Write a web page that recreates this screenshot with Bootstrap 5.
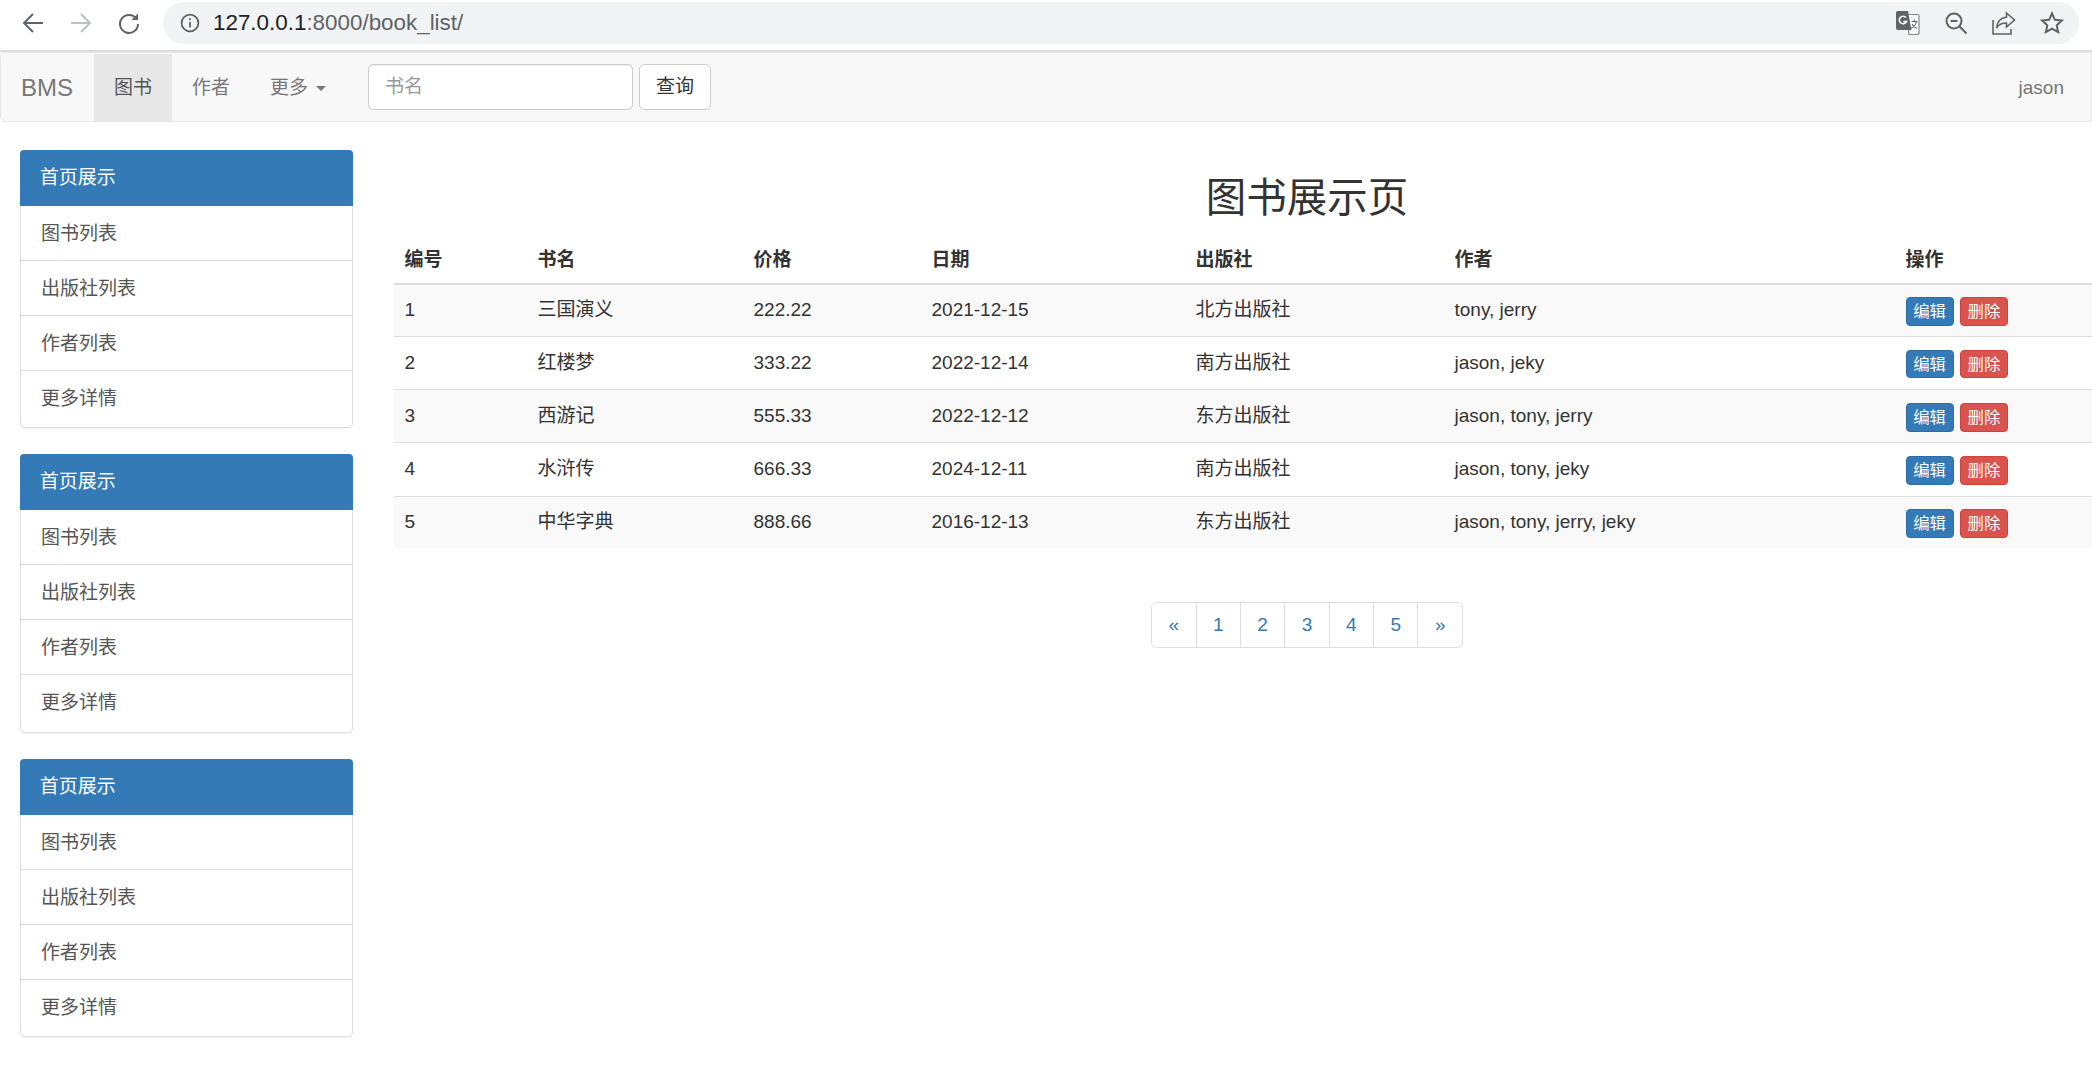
<!DOCTYPE html>
<html lang="zh-CN">
<head>
<meta charset="utf-8">
<title>图书展示页</title>
<link href="https://cdn.jsdelivr.net/npm/bootstrap@5.3.0/dist/css/bootstrap.min.css" rel="stylesheet">
<style>
body { font-family: "Liberation Sans", "Noto Sans CJK SC", sans-serif; font-size: 19px; line-height: 1.42857; color: #333; background: #fff; }
a { text-decoration: none; }

.chrome-bar { height: 52px; padding: 2px 13px 6px 0; border-bottom: 2px solid #dadce0; background: #fff; }
.chrome-nav { width: 163px; padding-left: 21px; gap: 24px; }
.chrome-pill { height: 42px; border-radius: 21px; background: #f1f3f4; padding: 0 15px 0 17px; }
.chrome-url { font-size: 22.4px; color: #5f6368; margin-left: 13px; line-height: 42px; }
.chrome-url b { font-weight: 400; color: #202124; }
.chrome-actions { gap: 24px; }

.bms-nav.navbar { height: 70px; padding: 0; background: #f8f8f8; border: 1.33px solid #e7e7e7; border-radius: 5.33px 0 0 5.33px; margin-bottom: 26.67px; flex-wrap: nowrap; }
.bms-nav .navbar-brand { font-size: 24px; color: #777; padding: 0 21px 0 20px; margin: 0; line-height: 67px; }
.bms-nav.navbar .navbar-nav .nav-link { color: #777; padding: 0 20px; line-height: 67px; height: 67px; font-size: 19px; }
.bms-nav.navbar .navbar-nav .nav-link.active { background: #e7e7e7; color: #555; }
.bms-nav .dropdown-toggle::after { margin-left: 8px; vertical-align: 3px; }
.bms-search { margin-left: 22px; gap: 6px; }
.bms-search .form-control { width: 265px; height: 46px; font-size: 19px; padding: 0 16px; border: 1.33px solid #ccc; border-radius: 5.33px; color: #555; box-shadow: inset 0 1px 1px rgba(0,0,0,.075); }
.bms-search .form-control::placeholder { color: #999; }
.bms-search .btn { width: 72px; height: 46px; font-size: 19px; padding: 1px 0 0; border: 1.33px solid #ccc; border-radius: 5.33px; color: #333; background: #fff; }
.bms-user { margin-right: 7px; }

.page-shell { display: flex; width: 100%; }
.side-col { width: 394px; flex: none; padding: 1.33px 41px 0 20px; }
.main-col { flex: 1 1 0; min-width: 0; }

.side-panel.card { border: 1.33px solid #ddd; border-radius: 5.33px; margin-bottom: 26.67px; box-shadow: 0 1px 1px rgba(0,0,0,.05); height: 278px; }
.side-panel .card-header { height: 56px; margin: -1.33px -1.33px 0; padding: 0 20px; line-height: 55px; background: #337ab7; color: #fff; border: 0; border-radius: 4px 4px 0 0; font-size: 19px; }
.side-panel .list-group-item { height: 55px; padding: 0 20px; line-height: 55px; color: #555; border-color: #ddd; border-width: 0 0 1.33px; font-size: 19px; background: transparent; }
.side-panel .list-group-item:last-child { border-bottom: 0; }

.page-title { font-size: 40.5px; font-weight: 400; line-height: 44px; margin: 27px 0 11px; padding-left: 128px; text-align: center; color: #333; }

.book-table.table { --bs-table-color: #333; --bs-table-striped-color: #333; --bs-table-striped-bg: #f9f9f9; --bs-table-border-color: #ddd; --bs-table-bg: transparent; table-layout: fixed; width: 100%; margin-bottom: 54px; font-size: 19px; }
.book-table th, .book-table td { padding: 0 10.5px; vertical-align: middle; color: #333; }
.book-table thead th { height: 53px; padding-top: 6px; border-bottom: 2.67px solid #ddd; font-weight: 700; }
.book-table tbody td { height: 53.1px; padding-bottom: 2px; border-bottom: 1.33px solid #ddd; }
.book-table tbody tr:last-child td { height: 51.5px; padding-bottom: 1px; border-bottom: 0; }
.w-no { width: 133px; } .w-name { width: 216px; } .w-price { width: 178px; } .w-date { width: 264px; }
.w-pub { width: 259px; } .w-author { width: 451px; }
.op-cell { white-space: nowrap; }
.op-btn.btn { font-size: 16.4px; line-height: 24px; padding: 1.33px 6.67px; border-radius: 4px; border-width: 1.33px; position: relative; top: 1.5px; }
.op-btn.btn-primary { background: #337ab7; border-color: #2e6da4; }
.op-btn.btn-danger { background: #d9534f; border-color: #d43f3a; margin-left: 1px; }

.pager-wrap { padding-left: 128px; }
.bms-pager.pagination { --bs-pagination-color: #337ab7; --bs-pagination-border-color: #ddd; --bs-pagination-border-radius: 5.33px; --bs-pagination-border-width: 1.33px; margin: 0; }
.bms-pager .page-link { height: 46px; width: 45.4px; padding: 0; text-align: center; line-height: 44px; font-size: 19px; color: #337ab7; }
</style>
</head>
<body>

<div class="chrome-bar d-flex">
  <div class="chrome-nav d-flex align-items-center flex-none">
    <svg width="24" height="24" viewBox="0 0 24 24" fill="none" stroke="#5f6368" stroke-width="2"><path d="M22 12H3M12 3l-9 9 9 9"/></svg>
    <svg width="24" height="24" viewBox="0 0 24 24" fill="none" stroke="#bdc1c6" stroke-width="2"><path d="M2 12h19M12 3l9 9-9 9"/></svg>
    <svg width="24" height="24" viewBox="0 0 24 24" fill="none" stroke="#5f6368" stroke-width="2"><path d="M19.5 8A9 9 0 1 0 21 13"/><path d="M21 2.5V9h-6.5z" fill="#5f6368" stroke="none"/></svg>
  </div>
  <div class="chrome-pill flex-grow-1 d-flex align-items-center justify-content-between">
    <div class="d-flex align-items-center">
      <svg width="20" height="20" viewBox="0 0 20 20" fill="none" stroke="#5f6368" stroke-width="1.8"><circle cx="10" cy="10" r="8.4"/><path d="M10 9v5.5M10 5.2v2"/></svg>
      <span class="chrome-url"><b>127.0.0.1</b>:8000/book_list/</span>
    </div>
    <div class="chrome-actions d-flex align-items-center">
      <svg width="24" height="24" viewBox="0 0 24 24"><path d="M11 3.5h10.5a1.5 1.5 0 0 1 1.5 1.5v17a1.5 1.5 0 0 1-1.5 1.5H13l-2-20z" fill="#fff" stroke="#80868b" stroke-width="1.2"/><path d="M2 0h10l3.4 19H2a2 2 0 0 1-2-2V2a2 2 0 0 1 2-2z" fill="#5f6368"/><path d="M10 6.5A3.8 3.8 0 1 0 10.6 10.5H7.4" fill="none" stroke="#fff" stroke-width="1.6"/><path d="M15.5 10.5h6M18.3 8.5v2M20.5 10.5c-.8 4-3.5 6-6 7M16 13c1 2 2.800 3.500 5 4.500" fill="none" stroke="#5f6368" stroke-width="1.1"/></svg>
      <svg width="24" height="24" viewBox="0 0 24 24" fill="none" stroke="#5f6368" stroke-width="2"><circle cx="10" cy="10" r="7.500"/><path d="M6.500 10h7M15.500 15.500L22.500 22.500"/></svg>
      <svg width="24" height="24" viewBox="0 0 24 24" fill="none" stroke="#5f6368" stroke-width="1.6"><path d="M1 9v14h18v-5"/><path d="M14.500 2l8 7-8 7v-4c-5 0-8 1.500-10 5 .5-6 4-10 10-11z"/></svg>
      <svg width="24" height="24" viewBox="0 0 24 24" fill="none" stroke="#5f6368" stroke-width="2"><path d="M12 2.500l2.900 6.300 6.900.8-5.100 4.700 1.400 6.800-6.100-3.400-6.100 3.400 1.400-6.800-5.100-4.700 6.900-.8z"/></svg>
    </div>
  </div>
</div>

<nav class="bms-nav navbar navbar-expand">
  <a class="navbar-brand" href="#">BMS</a>
  <ul class="navbar-nav">
    <li class="nav-item"><a class="nav-link active" href="#">图书</a></li>
    <li class="nav-item"><a class="nav-link" href="#">作者</a></li>
    <li class="nav-item dropdown"><a class="nav-link dropdown-toggle" href="#" role="button" data-bs-toggle="dropdown">更多</a>
      <ul class="dropdown-menu">
        <li><a class="dropdown-item" href="#">更多详情</a></li>
      </ul>
    </li>
  </ul>
  <form class="bms-search d-flex">
    <input class="form-control" type="text" placeholder="书名">
    <button class="btn" type="button">查询</button>
  </form>
  <ul class="navbar-nav ms-auto bms-user">
    <li class="nav-item"><a class="nav-link" href="#">jason</a></li>
  </ul>
</nav>

<div class="page-shell">
  <aside class="side-col">
    <div class="side-panel card">
      <div class="card-header">首页展示</div>
      <div class="list-group list-group-flush">
        <a class="list-group-item" href="#">图书列表</a>
        <a class="list-group-item" href="#">出版社列表</a>
        <a class="list-group-item" href="#">作者列表</a>
        <a class="list-group-item" href="#">更多详情</a>
      </div>
    </div>
    <div class="side-panel card">
      <div class="card-header">首页展示</div>
      <div class="list-group list-group-flush">
        <a class="list-group-item" href="#">图书列表</a>
        <a class="list-group-item" href="#">出版社列表</a>
        <a class="list-group-item" href="#">作者列表</a>
        <a class="list-group-item" href="#">更多详情</a>
      </div>
    </div>
    <div class="side-panel card">
      <div class="card-header">首页展示</div>
      <div class="list-group list-group-flush">
        <a class="list-group-item" href="#">图书列表</a>
        <a class="list-group-item" href="#">出版社列表</a>
        <a class="list-group-item" href="#">作者列表</a>
        <a class="list-group-item" href="#">更多详情</a>
      </div>
    </div>
  </aside>

  <main class="main-col">
    <h2 class="page-title">图书展示页</h2>
    <table class="book-table table table-striped">
      <colgroup>
        <col class="w-no"><col class="w-name"><col class="w-price"><col class="w-date"><col class="w-pub"><col class="w-author"><col>
      </colgroup>
      <thead>
        <tr><th>编号</th><th>书名</th><th>价格</th><th>日期</th><th>出版社</th><th>作者</th><th>操作</th></tr>
      </thead>
      <tbody>
        <tr><td>1</td><td>三国演义</td><td>222.22</td><td>2021-12-15</td><td>北方出版社</td><td>tony, jerry</td><td class="op-cell"><a class="op-btn btn btn-primary" href="#">编辑</a> <a class="op-btn btn btn-danger" href="#">删除</a></td></tr>
        <tr><td>2</td><td>红楼梦</td><td>333.22</td><td>2022-12-14</td><td>南方出版社</td><td>jason, jeky</td><td class="op-cell"><a class="op-btn btn btn-primary" href="#">编辑</a> <a class="op-btn btn btn-danger" href="#">删除</a></td></tr>
        <tr><td>3</td><td>西游记</td><td>555.33</td><td>2022-12-12</td><td>东方出版社</td><td>jason, tony, jerry</td><td class="op-cell"><a class="op-btn btn btn-primary" href="#">编辑</a> <a class="op-btn btn btn-danger" href="#">删除</a></td></tr>
        <tr><td>4</td><td>水浒传</td><td>666.33</td><td>2024-12-11</td><td>南方出版社</td><td>jason, tony, jeky</td><td class="op-cell"><a class="op-btn btn btn-primary" href="#">编辑</a> <a class="op-btn btn btn-danger" href="#">删除</a></td></tr>
        <tr><td>5</td><td>中华字典</td><td>888.66</td><td>2016-12-13</td><td>东方出版社</td><td>jason, tony, jerry, jeky</td><td class="op-cell"><a class="op-btn btn btn-primary" href="#">编辑</a> <a class="op-btn btn btn-danger" href="#">删除</a></td></tr>
      </tbody>
    </table>
    <nav class="pager-wrap d-flex justify-content-center">
      <ul class="bms-pager pagination">
        <li class="page-item"><a class="page-link" href="#">«</a></li>
        <li class="page-item"><a class="page-link" href="#">1</a></li>
        <li class="page-item"><a class="page-link" href="#">2</a></li>
        <li class="page-item"><a class="page-link" href="#">3</a></li>
        <li class="page-item"><a class="page-link" href="#">4</a></li>
        <li class="page-item"><a class="page-link" href="#">5</a></li>
        <li class="page-item"><a class="page-link" href="#">»</a></li>
      </ul>
    </nav>
  </main>
</div>

<script src="https://cdn.jsdelivr.net/npm/bootstrap@5.3.0/dist/js/bootstrap.bundle.min.js"></script>
</body>
</html>
